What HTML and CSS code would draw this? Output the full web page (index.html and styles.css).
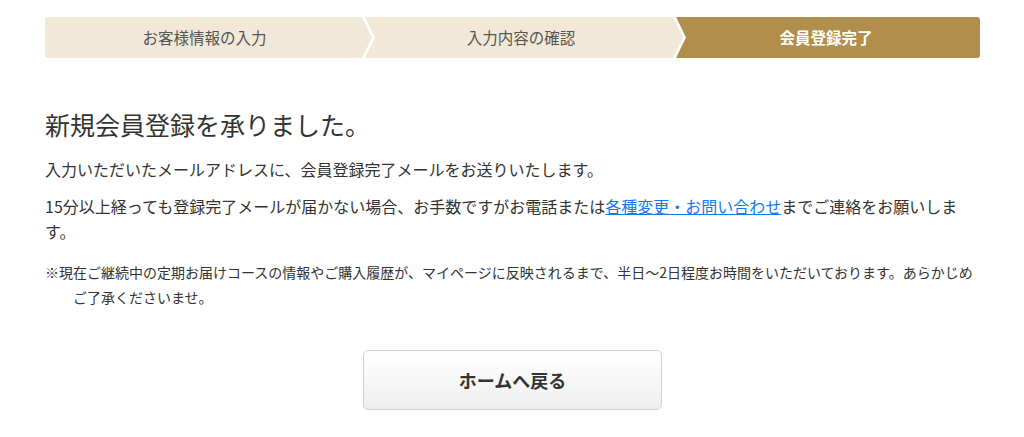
FILE: index.html
```html
<!DOCTYPE html>
<html lang="ja">
<head>
<meta charset="utf-8">
<title>会員登録完了</title>
<link rel="stylesheet" href="styles.css">
</head>
<body>
<div class="page">
  <ol class="steps">
    <li class="step step-first">お客様情報の入力</li>
    <li class="step step-mid">入力内容の確認</li>
    <li class="step step-last is-current">会員登録完了</li>
  </ol>

  <h1 class="title">新規会員登録を承りました。</h1>
  <p class="text text-first">入力いただいたメールアドレスに、会員登録完了メールをお送りいたします。</p>
  <p class="text">15分以上経っても登録完了メールが届かない場合、お手数ですがお電話または<a class="link" href="#">各種変更・お問い合わせ</a>までご連絡をお願いします。</p>
  <p class="note">※現在ご継続中の定期お届けコースの情報やご購入履歴が、マイページに反映されるまで、半日〜2日程度お時間をいただいております。あらかじめご了承くださいませ。</p>

  <div class="actions">
    <a class="btn" href="#">ホームへ戻る</a>
  </div>
</div>
</body>
</html>
```

FILE: styles.css
```css
* { box-sizing: border-box; }

html, body {
  margin: 0;
  padding: 0;
  background: #fff;
}

body {
  font-family: "Noto Sans CJK JP", "Noto Sans", sans-serif;
  color: #333;
}

.page {
  width: 935px;
  margin: 0 0 0 45px;
  padding-top: 17px;
}

.steps {
  display: flex;
  list-style: none;
  margin: 0;
  padding: 0;
  height: 41px;
  border-radius: 3px;
  overflow: hidden;
}

.step {
  display: flex;
  align-items: center;
  justify-content: center;
  background: #f1e8d7;
  color: #555;
  font-size: 15.5px;
  line-height: 1;
}

.step-first {
  flex: 0 0 327px;
  clip-path: polygon(0 0, calc(100% - 10px) 0, 100% 50%, calc(100% - 10px) 100%, 0 100%);
  padding-right: 8px;
}

.step-mid {
  flex: 0 0 318px;
  margin-left: -7px;
  clip-path: polygon(0 0, calc(100% - 10px) 0, 100% 50%, calc(100% - 10px) 100%, 0 100%, 10px 50%);
  padding-right: 6px;
}

.step-last {
  flex: 1 1 0;
  margin-left: -7px;
  clip-path: polygon(0 0, 100% 0, 100% 100%, 0 100%, 10px 50%);
  padding-right: 4px;
}

.step.is-current {
  background: #b28e4c;
  color: #fff;
  font-weight: bold;
}

.title {
  margin: 48px 0 0;
  font-size: 25px;
  font-weight: normal;
  line-height: 36px;
  color: #333;
}

.text {
  margin: 11px 0 0;
  font-size: 16px;
  line-height: 25.6px;
}

.text-first {
  margin-top: 15px;
}

.link {
  color: #1578ef;
  text-decoration: underline;
}

.note {
  margin: 15px 0 0;
  padding-left: 28px;
  text-indent: -28px;
  font-size: 14px;
  line-height: 25px;
}

.actions {
  display: flex;
  justify-content: center;
  margin-top: 40px;
}

.btn {
  display: flex;
  align-items: center;
  justify-content: center;
  width: 299px;
  height: 60px;
  border: 1px solid #d2d2d2;
  border-radius: 5px;
  background: linear-gradient(#ffffff, #eeeeee);
  color: #333;
  font-size: 18px;
  font-weight: bold;
  text-decoration: none;
}
```
